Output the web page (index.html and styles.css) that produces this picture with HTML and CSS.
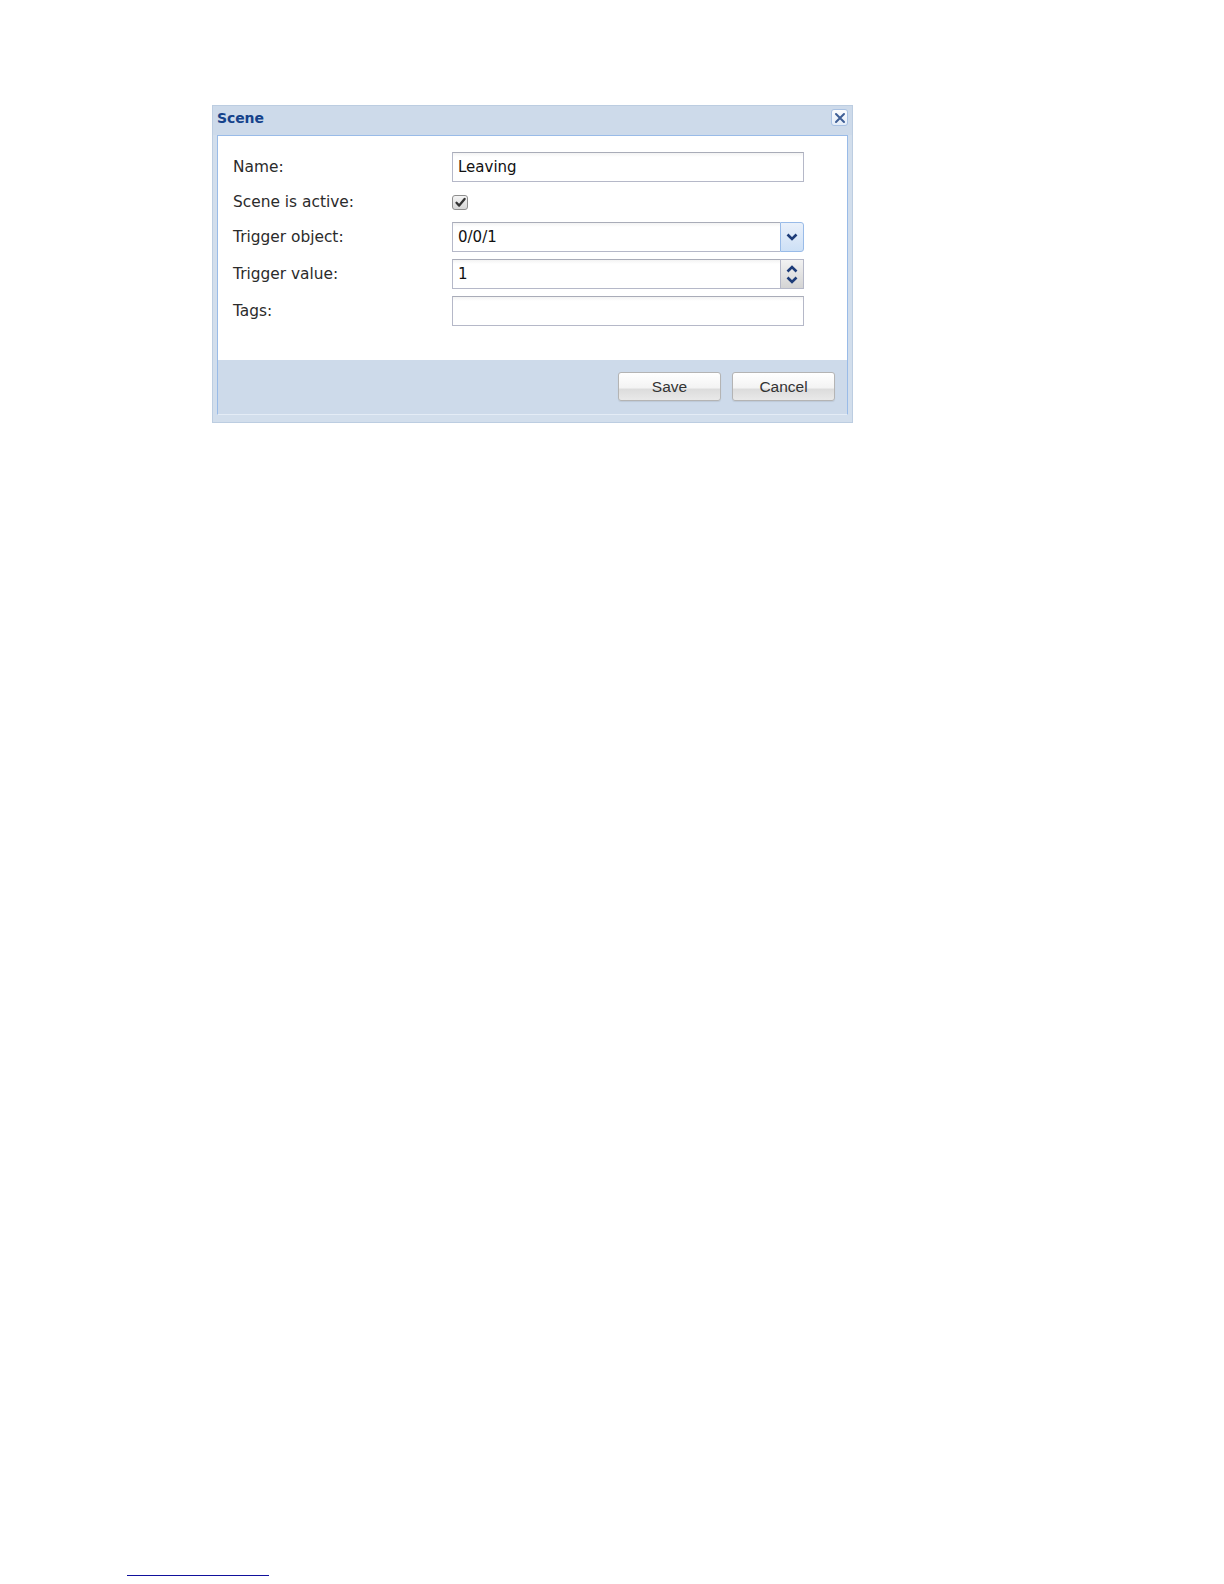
FILE: index.html
```html
<!DOCTYPE html>
<html lang="en">
<head>
<meta charset="utf-8">
<title>Scene</title>
<link rel="stylesheet" href="styles.css">
</head>
<body>
<div class="page">
  <div class="window">
    <div class="header">
      <span class="title">Scene</span>
      <span class="close">
        <svg width="12" height="12" viewBox="0 0 12 12"><path d="M2 2 L10 10 M10 2 L2 10" stroke="#3f5f96" stroke-width="2" stroke-linecap="round" fill="none"/></svg>
      </span>
    </div>
    <div class="inner">
      <div class="body">
        <div class="row">
          <label class="label">Name:</label>
          <div class="field"><div class="text">Leaving</div></div>
        </div>
        <div class="row row-check">
          <label class="label">Scene is active:</label>
          <div class="field">
            <span class="checkbox">
              <svg width="13" height="13" viewBox="0 0 13 13"><path d="M2.5 6.8 L5.2 9.6 L10.6 3" stroke="#333" stroke-width="2.3" fill="none" stroke-linecap="round" stroke-linejoin="round"/></svg>
            </span>
          </div>
        </div>
        <div class="row">
          <label class="label">Trigger object:</label>
          <div class="field combo">
            <div class="text text-grow">0/0/1</div>
            <span class="trigger">
              <svg width="12" height="8" viewBox="0 0 12 8"><path d="M1.5 1.5 L6 6 L10.5 1.5" stroke="#1d3c78" stroke-width="2.6" fill="none"/></svg>
            </span>
          </div>
        </div>
        <div class="row">
          <label class="label">Trigger value:</label>
          <div class="field combo">
            <div class="text text-grow">1</div>
            <span class="spinner">
              <svg width="12" height="8" viewBox="0 0 12 8"><path d="M1.5 6.5 L6 2 L10.5 6.5" stroke="#1d3c78" stroke-width="2.6" fill="none"/></svg>
              <svg width="12" height="8" viewBox="0 0 12 8"><path d="M1.5 1.5 L6 6 L10.5 1.5" stroke="#1d3c78" stroke-width="2.6" fill="none"/></svg>
            </span>
          </div>
        </div>
        <div class="row">
          <label class="label">Tags:</label>
          <div class="field"><div class="text"></div></div>
        </div>
      </div>
      <div class="footer">
        <button class="btn">Save</button>
        <button class="btn">Cancel</button>
      </div>
    </div>
  </div>
  <div class="rule"></div>
</div>
</body>
</html>
```

FILE: styles.css
```css
* { box-sizing: border-box; }
html, body { margin: 0; padding: 0; background: #ffffff; }
.page { padding-top: 105px; }

.window {
  margin-left: 212px;
  width: 641px;
  height: 318px;
  border: 1px solid #bccde1;
  background: #d2deec;
  padding: 0 4px 0 4px;
  display: flex;
  flex-direction: column;
}

.header {
  height: 29px;
  display: flex;
  justify-content: space-between;
  align-items: flex-start;
  margin-left: -4px;
  margin-right: -4px;
  padding-left: 4px;
  padding-right: 4px;
  background: #cddaea;
}
.title {
  margin-top: 4px;
  font-family: "DejaVu Sans", Verdana, sans-serif;
  font-weight: bold;
  font-size: 14px;
  line-height: 17px;
  color: #15428b;
  letter-spacing: -0.1px;
}
.close {
  margin-top: 3px;
  width: 17px;
  height: 17px;
  border: 1px solid #a9c1e2;
  border-radius: 3px;
  background: linear-gradient(#fbfcfe, #e3ecf8);
  display: flex;
  align-items: center;
  justify-content: center;
}

.inner {
  height: 280px;
  border: 1px solid #99bbe8;
  border-bottom-color: #e4ecf6;
  display: flex;
  flex-direction: column;
}
.body {
  height: 224px;
  background: #ffffff;
  padding: 16px 0 0 15px;
  display: flex;
  flex-direction: column;
  gap: 7px;
}
.row {
  display: flex;
  align-items: center;
  height: 30px;
}
.row-check { height: 26px; }
.label {
  width: 219px;
  font-family: "DejaVu Sans", Verdana, sans-serif;
  font-size: 15.4px;
  color: #2b2b2b;
}
.field {
  width: 352px;
  height: 30px;
  display: flex;
}
.row-check .field { height: 26px; align-items: center; }
.text {
  flex: 1;
  height: 30px;
  border: 1px solid #b5b8c8;
  border-top-color: #a9acb8;
  background: linear-gradient(#f3f3f3 0, #ffffff 4px);
  font-family: "DejaVu Sans", Verdana, sans-serif;
  font-size: 15px;
  line-height: 29px;
  color: #111;
  padding-left: 5px;
}
.combo .text-grow { border-right: none; }
.trigger {
  width: 24px;
  height: 30px;
  border: 1px solid #99bbe8;
  border-radius: 0 3px 3px 0;
  background: linear-gradient(#e9f0fa, #cde0f6);
  display: flex;
  align-items: center;
  justify-content: center;
}
.spinner {
  width: 24px;
  height: 30px;
  border: 1px solid #b5b8c8;
  background: linear-gradient(#f2f2f2, #d4d4d4);
  display: flex;
  flex-direction: column;
  align-items: center;
  justify-content: center;
  gap: 3px;
}
.checkbox {
  width: 16px;
  height: 15px;
  border: 1px solid #8e8e8e;
  border-radius: 3px;
  background: linear-gradient(#f5f5f5, #d6d6d6);
  display: flex;
  align-items: center;
  justify-content: center;
}

.footer {
  flex: 1;
  background: #cddaea;
  display: flex;
  justify-content: flex-end;
  align-items: flex-start;
  padding: 12px 12px 0 0;
  gap: 11px;
}
.btn {
  width: 103px;
  height: 29px;
  border: 1px solid #b4b4b4;
  border-radius: 3px;
  background: linear-gradient(#ffffff 0%, #f3f3f3 55%, #dcdcdc 60%, #e9e9e9 100%);
  box-shadow: 0 1px 1px rgba(0,0,0,0.08);
  font-family: "Liberation Sans", Arial, sans-serif;
  font-size: 15.5px;
  color: #333;
  padding: 0;
}

.rule {
  margin-top: 1152px;
  margin-left: 127px;
  width: 142px;
  height: 1px;
  background: #11119c;
}
```
